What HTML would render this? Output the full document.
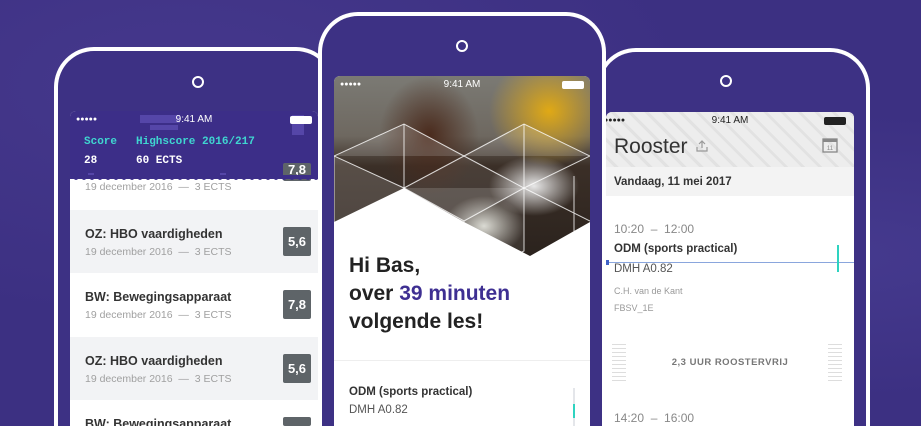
<!DOCTYPE html>
<html><head><meta charset="utf-8"><style>
*{margin:0;padding:0;box-sizing:border-box}
html,body{width:921px;height:426px;overflow:hidden}
body{background:#3e3183;font-family:"Liberation Sans",Arial,sans-serif;position:relative}
#wrap{position:absolute;left:0;top:0;width:921px;height:426px;overflow:hidden}
.bg{position:absolute;inset:0;background:radial-gradient(ellipse at 20% 20%,#45388c,transparent 50%),radial-gradient(ellipse at 90% 60%,#453a8e,transparent 40%),#3c3082}
.phone{position:absolute;border:4px solid #fff;border-bottom:none;border-radius:40px 40px 0 0;background:#3d3184}
.cam{position:absolute;width:12px;height:12px;border:2px solid #fff;border-radius:50%}
.scr{position:absolute;overflow:hidden;background:#fff;border-radius:6px 6px 0 0}
.sb{position:absolute;top:0;left:0;right:0;height:18px;font-size:10px;color:#fff;text-align:center;line-height:17px}
.dots{position:absolute;left:6px;top:0;font-size:7px;letter-spacing:0}
.bat{position:absolute;right:6px;top:5px;width:22px;height:8px;border:1px solid #fff;background:#fff;border-radius:2px}
.row{position:absolute;left:0;width:248px;height:63px}
.row b{position:absolute;left:15px;top:17px;font-size:12.5px;color:#333}
.row i{position:absolute;left:15px;top:36px;font-style:normal;font-size:10.5px;color:#a0a0a0}
.badge{position:absolute;left:213px;top:17px;width:28px;height:29px;background:#5e6468;color:#fff;font-size:13px;font-weight:bold;text-align:center;line-height:29px;border-radius:2px}
.mono{font-family:"Liberation Mono",monospace;font-weight:bold}
</style></head><body><div id="wrap">
<div class="bg"></div>

<!-- left phone -->
<div class="phone" style="left:54px;top:47px;width:282px;height:379px"></div>
<div class="cam" style="left:192px;top:76px"></div>
<div class="scr" style="left:70px;top:111px;width:248px;height:315px">
  <div style="position:absolute;left:0;top:0;width:248px;height:68px;background:#3c2e88"></div>
  <div style="position:absolute;left:70px;top:4px;width:40px;height:8px;background:#5546a8"></div>
  <div style="position:absolute;left:80px;top:14px;width:28px;height:5px;background:#5546a8"></div>
  <div style="position:absolute;left:222px;top:4px;width:12px;height:20px;background:#5546a8"></div>
  <div style="position:absolute;left:18px;top:62px;width:6px;height:5px;background:#5546a8"></div>
  <div style="position:absolute;left:150px;top:62px;width:6px;height:5px;background:#5546a8"></div>
  <div class="sb"><span class="dots">●●●●●</span>9:41 AM<span class="bat"></span></div>
  <div class="mono" style="position:absolute;left:14px;top:25px;font-size:11px;color:#3fd6d0">Score</div>
  <div class="mono" style="position:absolute;left:66px;top:25px;font-size:11px;color:#3fd6d0">Highscore 2016/217</div>
  <div class="mono" style="position:absolute;left:14px;top:44px;font-size:11px;color:#fff">28</div>
  <div class="mono" style="position:absolute;left:66px;top:44px;font-size:11px;color:#fff">60 ECTS</div>
  <div style="position:absolute;left:15px;top:70px;font-size:10.5px;color:#a0a0a0">19 december 2016 &nbsp;—&nbsp; 3 ECTS</div>
  <div class="badge" style="top:52px;height:18px;line-height:14px">7,8</div>
  <div style="position:absolute;left:0;top:64px;width:248px;height:4px;background:#3c2e88"></div>
  <svg style="position:absolute;left:0;top:66px" width="248" height="4"><path d="M0 0 H248 V2 Q246 4 244 2 T240 2 T236 2 T232 2 T228 2 T224 2 T220 2 T216 2 T212 2 T208 2 T204 2 T200 2 T196 2 T192 2 T188 2 T184 2 T180 2 T176 2 T172 2 T168 2 T164 2 T160 2 T156 2 T152 2 T148 2 T144 2 T140 2 T136 2 T132 2 T128 2 T124 2 T120 2 T116 2 T112 2 T108 2 T104 2 T100 2 T96 2 T92 2 T88 2 T84 2 T80 2 T76 2 T72 2 T68 2 T64 2 T60 2 T56 2 T52 2 T48 2 T44 2 T40 2 T36 2 T32 2 T28 2 T24 2 T20 2 T16 2 T12 2 T8 2 T4 2 T0 2Z" fill="#3c2e88"/></svg>
  <div class="row" style="top:99px;background:#f2f3f5"><b>OZ: HBO vaardigheden</b><i>19 december 2016 &nbsp;—&nbsp; 3 ECTS</i><div class="badge">5,6</div></div>
  <div class="row" style="top:162px"><b>BW: Bewegingsapparaat</b><i>19 december 2016 &nbsp;—&nbsp; 3 ECTS</i><div class="badge">7,8</div></div>
  <div class="row" style="top:226px;background:#f2f3f5"><b>OZ: HBO vaardigheden</b><i>19 december 2016 &nbsp;—&nbsp; 3 ECTS</i><div class="badge">5,6</div></div>
  <div class="row" style="top:289px;height:26px"><b>BW: Bewegingsapparaat</b><div class="badge" style="height:9px">&nbsp;</div></div>
</div>

<!-- right phone -->
<div class="phone" style="left:596px;top:48px;width:274px;height:378px"></div>
<div class="cam" style="left:720px;top:75px"></div>
<div class="scr" style="left:606px;top:112px;width:248px;height:314px">
  <div style="position:absolute;left:0;top:0;width:248px;height:55px;background:#ededed;background-image:repeating-linear-gradient(45deg,transparent 0 6px,#e2e2e2 6px 9px,transparent 9px 12px)"></div>
  <div class="sb" style="color:#222"><span class="dots" style="left:-2px">●●●●●</span>9:41 AM<span class="bat" style="border-color:#222;background:#222;right:8px"></span></div>
  <div style="position:absolute;left:8px;top:23px;font-size:21px;color:#333">Rooster</div>
  <svg style="position:absolute;left:90px;top:28px" width="12" height="12"><path d="M6 1V8M3 4L6 1L9 4M1 7V11H11V7" stroke="#999" fill="none" stroke-width="1.2"/></svg>
  <svg style="position:absolute;left:216px;top:24px" width="16" height="17"><rect x="1" y="3" width="14" height="13" fill="none" stroke="#888" stroke-width="1.3"/><rect x="1" y="3" width="14" height="3" fill="#888"/><text x="8" y="14" font-size="6" text-anchor="middle" fill="#888" font-family="Liberation Sans">11</text></svg>
  <div style="position:absolute;left:0;top:55px;width:248px;height:29px;background:#f3f3f3;font-size:11.5px;font-weight:bold;color:#333;padding:9px 0 0 8px">Vandaag, 11 mei 2017</div>
  <div style="position:absolute;left:8px;top:110px;font-size:12px;color:#888">10:20 &nbsp;–&nbsp; 12:00</div>
  <div style="position:absolute;left:8px;top:131px;font-size:11.5px;font-weight:bold;color:#333">ODM (sports practical)</div>
  <div style="position:absolute;left:0;top:150px;width:248px;height:1px;background:#8aa6dd"></div>
  <div style="position:absolute;left:0;top:148px;width:3px;height:5px;background:#3f62c8"></div>
  <div style="position:absolute;left:231px;top:133px;width:2px;height:27px;background:#2ed3c0"></div>
  <div style="position:absolute;left:8px;top:151px;font-size:11.5px;color:#555">DMH A0.82</div>
  <div style="position:absolute;left:8px;top:174px;font-size:9px;color:#999">C.H. van de Kant</div>
  <div style="position:absolute;left:8px;top:191px;font-size:9px;color:#999">FBSV_1E</div>
  <div style="position:absolute;left:6px;top:232px;width:14px;height:38px;background:repeating-linear-gradient(#ddd 0 1px,transparent 1px 4px)"></div>
  <div style="position:absolute;left:222px;top:232px;width:14px;height:38px;background:repeating-linear-gradient(#ddd 0 1px,transparent 1px 4px)"></div>
  <div style="position:absolute;left:0;width:248px;top:245px;text-align:center;font-size:9.5px;font-weight:bold;color:#777;letter-spacing:.5px">2,3 UUR ROOSTERVRIJ</div>
  <div style="position:absolute;left:8px;top:299px;font-size:12px;color:#888">14:20 &nbsp;–&nbsp; 16:00</div>
</div>

<!-- middle phone -->
<div class="phone" style="left:318px;top:12px;width:288px;height:414px"></div>
<div class="cam" style="left:456px;top:40px"></div>
<div class="scr" style="left:334px;top:76px;width:256px;height:350px">
  <div style="position:absolute;left:0;top:0;width:256px;height:185px;background:
   radial-gradient(ellipse 50px 60px at 95px 60px,#4a2a1c,transparent),
   radial-gradient(ellipse 60px 55px at 215px 35px,#e0a915,transparent),
   radial-gradient(ellipse 40px 30px at 150px 150px,#d8d8d0,transparent),
   radial-gradient(ellipse 45px 30px at 200px 110px,#e8e8e8,transparent),
   linear-gradient(#7b7a74 0,#6e6860 60px,#3b2f27 90px,#2a221d 185px)"></div>
  <svg style="position:absolute;left:0;top:0" width="256" height="185">
   <g stroke="rgba(255,255,255,.8)" stroke-width="1" fill="rgba(255,255,255,.15)">
    <path d="M0 80 L70 112 L70 170 L0 205Z"/>
    <path d="M70 112 L130 80 L190 112 L190 175 L130 205 L70 175Z" fill="rgba(255,255,255,.08)"/>
    <path d="M190 112 L256 80 M190 112 L256 145 M130 80 L190 48 L256 80 M70 112 L130 145 L190 112 M0 80 L70 48 L130 80 M130 145 L130 205 M70 48 L70 112 M190 48 L190 112 M240 100 V190"/>
   </g>
   <path d="M0 146 L70 112 L130 146 L196 180 L256 146 V185 H0Z" fill="#fff"/>
  </svg>
  <div style="position:absolute;left:0;top:0;width:256px;height:18px;font-size:10px;color:#fff;text-align:center;line-height:17px"><span class="dots">●●●●●</span>9:41 AM<span class="bat"></span></div>
  <div style="position:absolute;left:15px;top:176px;font-size:21px;font-weight:bold;color:#222;line-height:28px">Hi Bas,<br>over <span style="color:#3e2f92">39 minuten</span><br>volgende les!</div>
  <div style="position:absolute;left:0;top:284px;width:256px;height:1px;background:#eee"></div>
  <div style="position:absolute;left:15px;top:310px;font-size:11.5px;font-weight:bold;color:#333">ODM (sports practical)</div>
  <div style="position:absolute;left:15px;top:328px;font-size:11.5px;color:#555">DMH A0.82</div>
  <div style="position:absolute;left:239px;top:312px;width:2px;height:38px;background:#e4e6ea"></div>
  <div style="position:absolute;left:239px;top:328px;width:2px;height:14px;background:#2ed3c0"></div>
</div>
</div></body></html>
